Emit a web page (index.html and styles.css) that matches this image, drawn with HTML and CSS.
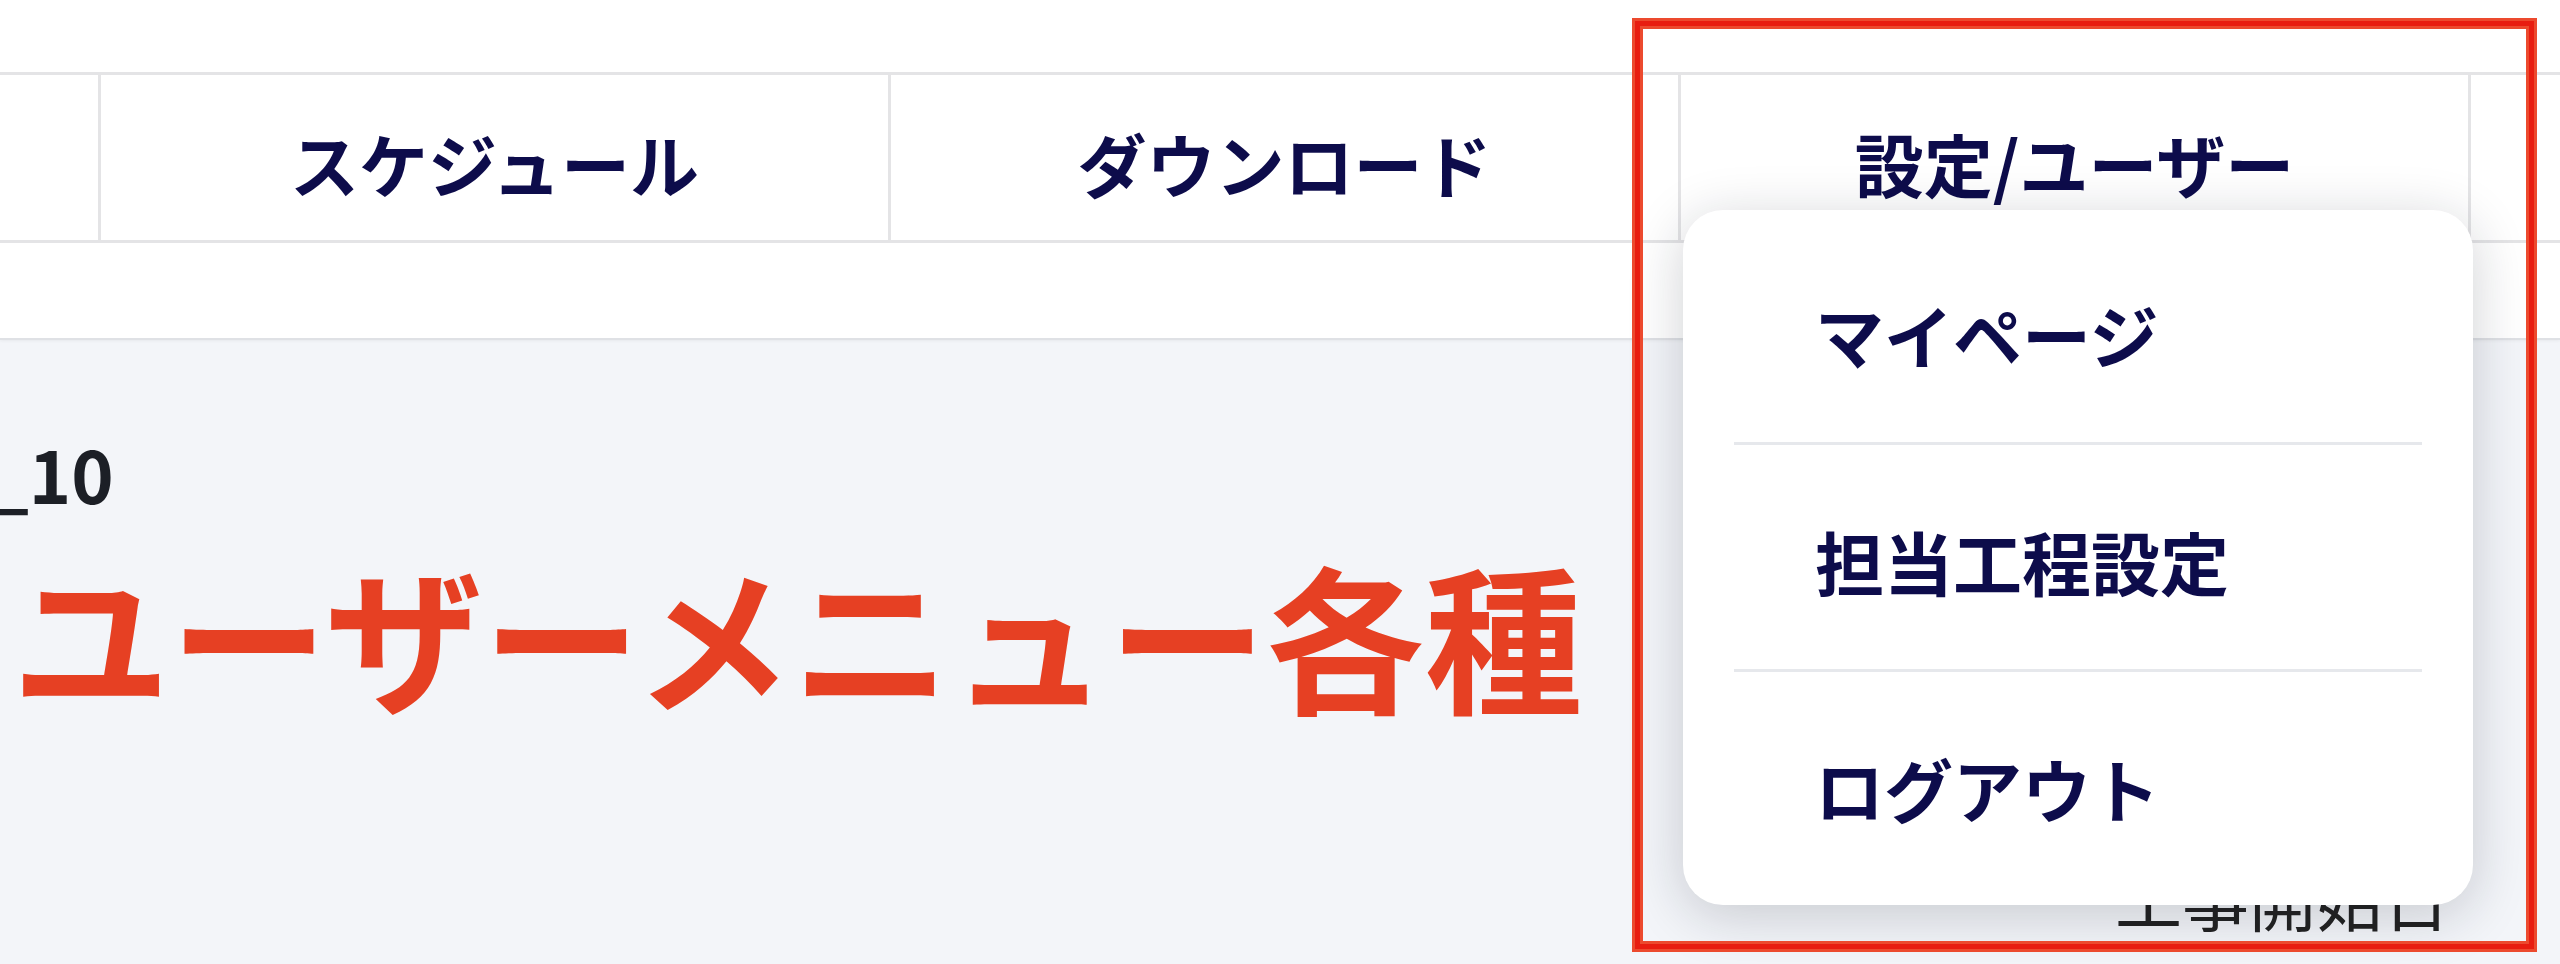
FILE: index.html
```html
<!DOCTYPE html>
<html lang="ja">

<head>
    <meta charset="UTF-8">
    <meta name="viewport" content="width=device-width, initial-scale=1.0">
    <title>ユーザーメニュー</title>
    <link rel="stylesheet" href="styles.css">
</head>

<body>

    <div class="header">
        <div class="nav">
            <div class="nav-tab">スケジュール</div>
            <div class="nav-tab">ダウンロード</div>
            <div class="nav-tab">
                設定/ユーザー
                <!-- ユーザーメニュー -->
                <div class="user-menu">
                    <div class="menu-item">マイページ</div>
                    <div class="menu-item">担当工程設定</div>
                    <div class="menu-item">ログアウト</div>
                </div>
            </div>
            <div class="nav-tail"></div>
        </div>
    </div>

    <div class="content">
        <div class="page-id">_10</div>
        <div class="note-title">ユーザーメニュー各種</div>
        <div class="field-row">
            <div class="field-label">工事開始日</div>
        </div>
    </div>

    <!-- 注釈の赤枠 -->
    <div class="note-frame"></div>

</body>

</html>
```

FILE: styles.css
```css
body, html {
    margin: 0;
    padding: 0;
    font-family: "Noto Sans CJK JP", "Noto Sans", sans-serif;
    background-color: #f3f5f9;
    height: 100vh;
    overflow: hidden;
}

body {
    position: relative;
}

.header {
    background-color: #fff;
    padding-top: 72px;
    height: 266px;
    border-bottom: 2px solid #dfe1e5;
    box-shadow: 0 1px 3px rgba(0, 0, 0, 0.05);
}

.nav {
    display: flex;
    box-sizing: border-box;
    height: 171px;
    padding-left: 98px;
    border-top: 3px solid #e4e4e6;
    border-bottom: 3px solid #e4e4e6;
}

.nav-tab {
    position: relative;
    flex-shrink: 0;
    box-sizing: border-box;
    width: 790px;
    padding-top: 10px;
    border-left: 3px solid #e4e4e6;
    display: flex;
    justify-content: center;
    align-items: center;
    font-size: 69px;
    font-weight: 700;
    color: #0d0c4b;
}

.nav-tail {
    flex: 1;
    border-left: 3px solid #e4e4e6;
}

.user-menu {
    position: absolute;
    top: 135px;
    left: 2px;
    z-index: 10;
    box-sizing: border-box;
    width: 790px;
    padding: 8px 51px 9px;
    background-color: #fff;
    border-radius: 40px;
    box-shadow: 0 10px 55px rgba(20, 24, 40, 0.2);
}

.menu-item {
    box-sizing: border-box;
    height: 224px;
    padding: 8px 0 0 81px;
    display: flex;
    align-items: center;
    font-size: 69px;
    font-weight: 700;
    color: #0d0c4b;
}

.menu-item + .menu-item {
    border-top: 3px solid #e6e8ec;
    height: 227px;
}

.content {
    padding-top: 97px;
}

.page-id {
    margin-left: -12px;
    font-size: 72px;
    font-weight: 700;
    line-height: 1;
    color: #1c1f26;
}

.note-title {
    margin-top: 46px;
    margin-left: 12px;
    font-size: 158px;
    font-weight: 700;
    line-height: 1;
    color: #e64023;
}

.field-row {
    display: flex;
    justify-content: flex-end;
    padding-right: 110px;
    margin-top: 150px;
}

.field-label {
    font-size: 67px;
    line-height: 1;
    color: #222;
}

.note-frame {
    position: absolute;
    top: 21px;
    left: 1635px;
    width: 889px;
    height: 918px;
    border: 5px solid #e81d10;
    outline: 3px solid #ec4a2e;
    box-shadow: inset 0 0 0 3px #ec4a2e;
    z-index: 20;
}
```
